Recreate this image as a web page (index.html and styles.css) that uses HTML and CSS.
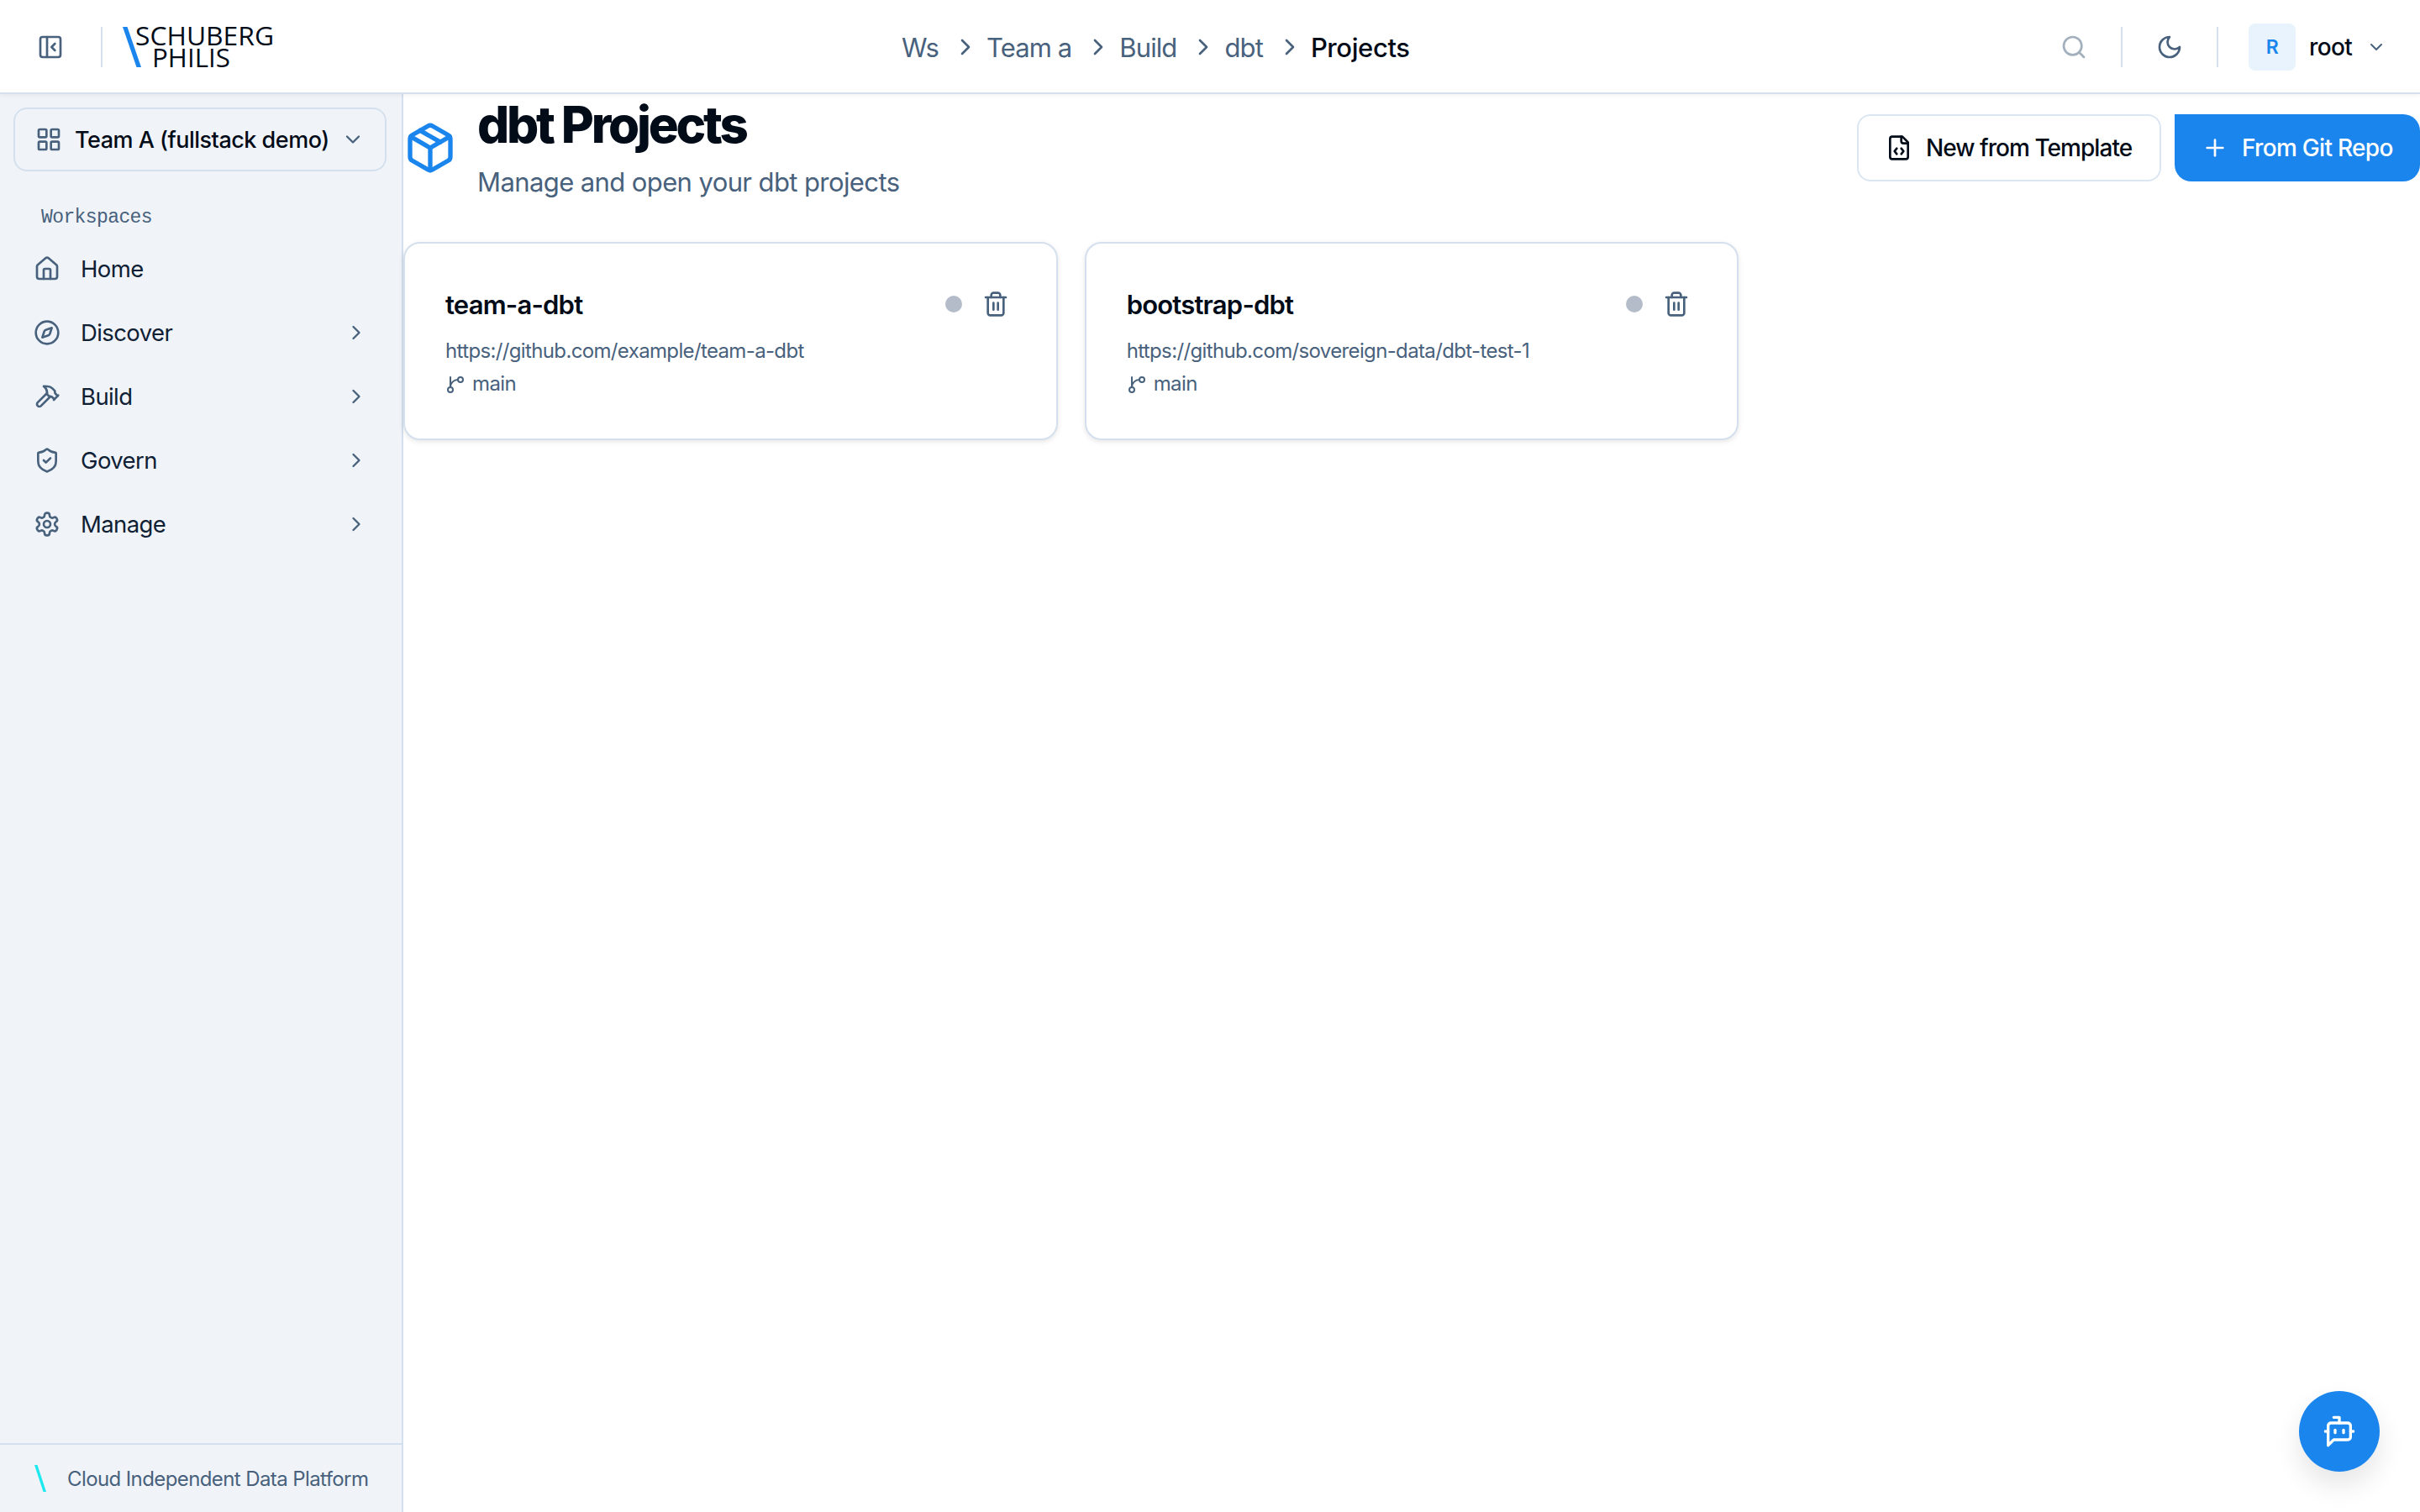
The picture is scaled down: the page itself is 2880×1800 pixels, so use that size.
FILE: index.html
```html
<!DOCTYPE html>
<html lang="en">
<head>
    <meta charset="UTF-8">
    <meta name="viewport" content="width=device-width, initial-scale=1.0">
    <title>dbt Projects</title>
    <link rel="stylesheet" href="styles.css">
</head>
<body>
    <!-- Icon shapes -->
    <svg class="sprite" aria-hidden="true">
        <symbol id="i-panel" viewBox="0 0 24 24"><rect width="18" height="18" x="3" y="3" rx="2"/><path d="M9 3v18"/><path d="m16 15-3-3 3-3"/></symbol>
        <symbol id="i-right" viewBox="0 0 24 24"><path d="m9 18 6-6-6-6"/></symbol>
        <symbol id="i-down" viewBox="0 0 24 24"><path d="m6 9 6 6 6-6"/></symbol>
        <symbol id="i-search" viewBox="0 0 24 24"><circle cx="11" cy="11" r="8"/><path d="m21 21-4.3-4.3"/></symbol>
        <symbol id="i-moon" viewBox="0 0 24 24"><path d="M12 3a6 6 0 0 0 9 9 9 9 0 1 1-9-9Z"/></symbol>
        <symbol id="i-grid" viewBox="0 0 24 24"><rect width="7" height="7" x="3" y="3" rx="1"/><rect width="7" height="7" x="14" y="3" rx="1"/><rect width="7" height="7" x="14" y="14" rx="1"/><rect width="7" height="7" x="3" y="14" rx="1"/></symbol>
        <symbol id="i-home" viewBox="0 0 24 24"><path d="M15 21v-8a1 1 0 0 0-1-1h-4a1 1 0 0 0-1 1v8"/><path d="M3 10a2 2 0 0 1 .709-1.528l7-5.999a2 2 0 0 1 2.582 0l7 5.999A2 2 0 0 1 21 10v9a2 2 0 0 1-2 2H5a2 2 0 0 1-2-2z"/></symbol>
        <symbol id="i-compass" viewBox="0 0 24 24"><path d="m16.24 7.76-1.804 5.411a2 2 0 0 1-1.265 1.265L7.76 16.24l1.804-5.411a2 2 0 0 1 1.265-1.265z"/><circle cx="12" cy="12" r="10"/></symbol>
        <symbol id="i-hammer" viewBox="0 0 24 24"><path d="m15 12-8.373 8.373a1 1 0 1 1-3-3L12 9"/><path d="m18 15 4-4"/><path d="m21.5 11.5-1.914-1.914A2 2 0 0 1 19 8.172V7l-2.26-2.26a6 6 0 0 0-4.202-1.756L9 2.96l.92.82A6.18 6.18 0 0 1 12 8.4V10l2 2h1.172a2 2 0 0 1 1.414.586L18.5 14.5"/></symbol>
        <symbol id="i-shield" viewBox="0 0 24 24"><path d="M20 13c0 5-3.5 7.5-7.66 8.95a1 1 0 0 1-.67-.01C7.5 20.5 4 18 4 13V6a1 1 0 0 1 1-1c2 0 4.5-1.2 6.24-2.72a1.17 1.17 0 0 1 1.52 0C14.51 3.81 17 5 19 5a1 1 0 0 1 1 1z"/><path d="m9 12 2 2 4-4"/></symbol>
        <symbol id="i-gear" viewBox="0 0 24 24"><path d="M12.22 2h-.44a2 2 0 0 0-2 2v.18a2 2 0 0 1-1 1.73l-.43.25a2 2 0 0 1-2 0l-.15-.08a2 2 0 0 0-2.73.73l-.22.38a2 2 0 0 0 .73 2.73l.15.1a2 2 0 0 1 1 1.72v.51a2 2 0 0 1-1 1.74l-.15.09a2 2 0 0 0-.73 2.73l.22.38a2 2 0 0 0 2.73.73l.15-.08a2 2 0 0 1 2 0l.43.25a2 2 0 0 1 1 1.73V20a2 2 0 0 0 2 2h.44a2 2 0 0 0 2-2v-.18a2 2 0 0 1 1-1.73l.43-.25a2 2 0 0 1 2 0l.15.08a2 2 0 0 0 2.73-.73l.22-.39a2 2 0 0 0-.73-2.73l-.15-.08a2 2 0 0 1-1-1.74v-.5a2 2 0 0 1 1-1.74l.15-.09a2 2 0 0 0 .73-2.73l-.22-.38a2 2 0 0 0-2.73-.73l-.15.08a2 2 0 0 1-2 0l-.43-.25a2 2 0 0 1-1-1.73V4a2 2 0 0 0-2-2z"/><circle cx="12" cy="12" r="3"/></symbol>
        <symbol id="i-package" viewBox="0 0 24 24"><path d="M11 21.73a2 2 0 0 0 2 0l7-4A2 2 0 0 0 21 16V8a2 2 0 0 0-1-1.73l-7-4a2 2 0 0 0-2 0l-7 4A2 2 0 0 0 3 8v8a2 2 0 0 0 1 1.73z"/><path d="M12 22V12"/><path d="M3.29 7 12 12l8.71-5"/><path d="m7.5 4.27 9 5.15"/></symbol>
        <symbol id="i-file" viewBox="0 0 24 24"><path d="M15 2H6a2 2 0 0 0-2 2v16a2 2 0 0 0 2 2h12a2 2 0 0 0 2-2V7Z"/><path d="M14 2v4a2 2 0 0 0 2 2h4"/><path d="m10 12.5-2 2.5 2 2.5"/><path d="m14 12.5 2 2.5-2 2.5"/></symbol>
        <symbol id="i-plus" viewBox="0 0 24 24"><path d="M5 12h14"/><path d="M12 5v14"/></symbol>
        <symbol id="i-trash" viewBox="0 0 24 24"><path d="M3 6h18"/><path d="M19 6v14c0 1-1 2-2 2H7c-1 0-2-1-2-2V6"/><path d="M8 6V4c0-1 1-2 2-2h4c1 0 2 1 2 2v2"/><path d="M10 11v6"/><path d="M14 11v6"/></symbol>
        <symbol id="i-branch" viewBox="0 0 24 24"><path d="M6 3v12"/><circle cx="18" cy="6" r="3"/><circle cx="6" cy="18" r="3"/><path d="M15 6a9 9 0 0 0-9 9"/></symbol>
        <symbol id="i-bot" viewBox="0 0 24 24"><path d="M12 6V2H8"/><path d="m8 18-4 4V8a2 2 0 0 1 2-2h12a2 2 0 0 1 2 2v8a2 2 0 0 1-2 2Z"/><path d="M2 12h2"/><path d="M9 11v2"/><path d="M15 11v2"/><path d="M20 12h2"/></symbol>
    </svg>

    <header class="topbar">
        <div class="topbar-left">
            <svg class="icon"><use href="#i-panel"/></svg>
            <span class="divider"></span>
            <svg class="logo" viewBox="0 0 182 48">
                <path class="logo-slash" d="M0 0h5.5L22 48h-5.500z"/>
                <text x="15" y="22" textLength="165" lengthAdjust="spacingAndGlyphs">SCHUBERG</text>
                <text x="35" y="48" textLength="93" lengthAdjust="spacingAndGlyphs">PHILIS</text>
            </svg>
        </div>
        <nav class="breadcrumbs">
            <span>Ws</span>
            <svg class="icon"><use href="#i-right"/></svg>
            <span>Team a</span>
            <svg class="icon"><use href="#i-right"/></svg>
            <span>Build</span>
            <svg class="icon"><use href="#i-right"/></svg>
            <span>dbt</span>
            <svg class="icon"><use href="#i-right"/></svg>
            <span class="current">Projects</span>
        </nav>
        <div class="topbar-right">
            <svg class="icon search"><use href="#i-search"/></svg>
            <span class="divider"></span>
            <svg class="icon moon"><use href="#i-moon"/></svg>
            <span class="divider"></span>
            <span class="avatar">R</span>
            <span class="username">root</span>
            <svg class="icon icon-xs"><use href="#i-down"/></svg>
        </div>
    </header>

    <div class="layout">
        <aside class="sidebar">
            <button class="team-select">
                <svg class="icon"><use href="#i-grid"/></svg>
                <span>Team A (fullstack demo)</span>
                <svg class="icon icon-sm"><use href="#i-down"/></svg>
            </button>
            <div class="section-label">Workspaces</div>
            <nav class="menu">
                <a class="menu-item"><svg class="icon"><use href="#i-home"/></svg><span>Home</span></a>
                <a class="menu-item"><svg class="icon"><use href="#i-compass"/></svg><span>Discover</span><svg class="icon icon-sm"><use href="#i-right"/></svg></a>
                <a class="menu-item"><svg class="icon"><use href="#i-hammer"/></svg><span>Build</span><svg class="icon icon-sm"><use href="#i-right"/></svg></a>
                <a class="menu-item"><svg class="icon"><use href="#i-shield"/></svg><span>Govern</span><svg class="icon icon-sm"><use href="#i-right"/></svg></a>
                <a class="menu-item"><svg class="icon"><use href="#i-gear"/></svg><span>Manage</span><svg class="icon icon-sm"><use href="#i-right"/></svg></a>
            </nav>
            <footer class="sidebar-footer">
                <svg class="mark" viewBox="0 0 14 32"><path d="M0 0h3.500L14 32h-3.500z"/></svg>
                <span>Cloud Independent Data Platform</span>
            </footer>
        </aside>

        <main class="content">
            <div class="page-header">
                <svg class="icon icon-page"><use href="#i-package"/></svg>
                <div class="page-title">
                    <h1>dbt Projects</h1>
                    <p>Manage and open your dbt projects</p>
                </div>
                <button class="btn btn-outline"><svg class="icon"><use href="#i-file"/></svg><span>New from Template</span></button>
                <button class="btn btn-primary"><svg class="icon"><use href="#i-plus"/></svg><span>From Git Repo</span></button>
            </div>

            <div class="cards">
                <article class="card">
                    <div class="card-head">
                        <h2>team-a-dbt</h2>
                        <span class="status"></span>
                        <svg class="icon"><use href="#i-trash"/></svg>
                    </div>
                    <p class="repo">https://github.com/example/team-a-dbt</p>
                    <p class="branch"><svg class="icon icon-xs"><use href="#i-branch"/></svg><span>main</span></p>
                </article>
                <article class="card">
                    <div class="card-head">
                        <h2>bootstrap-dbt</h2>
                        <span class="status"></span>
                        <svg class="icon"><use href="#i-trash"/></svg>
                    </div>
                    <p class="repo">https://github.com/sovereign-data/dbt-test-1</p>
                    <p class="branch"><svg class="icon icon-xs"><use href="#i-branch"/></svg><span>main</span></p>
                </article>
            </div>
        </main>
    </div>

    <button class="chat-button"><svg class="icon"><use href="#i-bot"/></svg></button>
</body>
</html>
```
FILE: styles.css
```css
* {
    box-sizing: border-box;
}
body {
    margin: 0;
    height: 100vh;
    display: flex;
    flex-direction: column;
    overflow: hidden;
    font-family: Inter, sans-serif;
    font-size: 28px;
    letter-spacing: -0.6px;
    color: #020b18;
    background-color: #fff;
}
h1, h2, p {
    margin: 0;
}
button {
    font: inherit;
    letter-spacing: inherit;
    color: inherit;
    border: none;
    cursor: pointer;
}
span, h1, h2, p {
    white-space: nowrap;
}
.sprite {
    display: none;
}
.icon {
    flex: none;
    width: 32px;
    height: 32px;
    fill: none;
    stroke: #48617c;
    stroke-width: 2;
    stroke-linecap: round;
    stroke-linejoin: round;
}
.icon-sm {
    width: 28px;
    height: 28px;
}
.icon-xs {
    width: 24px;
    height: 24px;
}

/* Top bar */
.topbar {
    flex: none;
    position: relative;
    display: flex;
    align-items: center;
    height: 112px;
    border-bottom: 2px solid #d5e0ee;
    box-shadow: 0 2px 6px rgba(0, 0, 0, 0.05);
    z-index: 1;
}
.topbar-left {
    display: flex;
    align-items: center;
    width: 1073px;
    padding: 2px 0 0 44px;
}
.divider {
    flex: none;
    width: 2px;
    height: 48px;
    background-color: #d5e0ee;
}
.topbar-left .divider {
    margin: 0 24px 0 44px;
}
.logo {
    width: 182px;
    height: 48px;
    overflow: visible;
    font-family: "Open Sans", sans-serif;
    font-size: 31px;
    font-weight: 500;
    letter-spacing: 0;
    fill: #020b18;
}
.logo-slash {
    fill: #1b85ee;
}
.breadcrumbs {
    display: flex;
    align-items: center;
    gap: 10px;
    padding-top: 2px;
    font-size: 31px;
    letter-spacing: -0.9px;
    color: #48617c;
}
.breadcrumbs .icon {
    margin: 0 -1px 0 6px;
}
.breadcrumbs .current {
    color: #020b18;
    font-weight: 500;
    letter-spacing: -0.4px;
}
.topbar-right {
    display: flex;
    align-items: center;
    margin-left: auto;
    padding: 2px 40px 0 0;
}
.search {
    opacity: 0.5;
    margin-right: 40px;
}
.moon {
    margin: 0 40px;
}
.avatar {
    display: flex;
    align-items: center;
    justify-content: center;
    width: 56px;
    height: 56px;
    margin: 0 16px 0 36px;
    border-radius: 8px;
    background-color: #e8f3fd;
    color: #1b85ee;
    font-size: 23px;
    font-weight: 600;
}
.username {
    width: 52px;
    margin-right: 16px;
    font-weight: 500;
}

/* Sidebar */
.layout {
    flex: 1;
    display: flex;
    min-height: 0;
}
.sidebar {
    flex: none;
    display: flex;
    flex-direction: column;
    width: 480px;
    background-color: #f0f4f9;
    border-right: 2px solid #d5e0ee;
}
.team-select {
    display: flex;
    align-items: center;
    height: 76px;
    margin: 16px 18px 0 16px;
    padding: 0 24px;
    border: 2px solid #d5e0ee;
    border-radius: 16px;
    background: none;
    font-size: 27px;
    font-weight: 500;
    letter-spacing: -0.5px;
}
.team-select span {
    flex: 1;
    margin-left: 15px;
    text-align: left;
}
.section-label {
    height: 78px;
    padding: 42px 0 0 49px;
    font-family: "Liberation Mono", monospace;
    font-size: 23px;
    line-height: 26px;
    letter-spacing: -0.6px;
    color: #48617c;
}
.menu {
    flex: 1;
}
.menu-item {
    display: flex;
    align-items: center;
    height: 76px;
    padding: 0 40px;
    font-size: 27.5px;
    color: #0f2034;
}
.menu-item span {
    flex: 1;
    margin-left: 24px;
}
.sidebar-footer {
    display: flex;
    align-items: center;
    gap: 25px;
    height: 82px;
    padding-left: 41px;
    border-top: 2px solid #d5e0ee;
    font-size: 24px;
    letter-spacing: -0.6px;
    color: #48617c;
}
.mark {
    width: 14px;
    height: 32px;
    fill: #1ce8ef;
}

/* Content */
.content {
    flex: 1;
}
.page-header {
    display: flex;
    align-items: center;
    height: 128px;
}
.icon-page {
    width: 64px;
    height: 64px;
    stroke: #1b85ee;
}
.page-title {
    flex: 1;
    align-self: flex-start;
    margin-left: 24px;
}
.page-title h1 {
    font-size: 60px;
    line-height: 72px;
    letter-spacing: -3.2px;
    font-weight: 800;
}
.page-title p {
    font-size: 31px;
    line-height: 66px;
    color: #48617c;
}
.btn {
    display: flex;
    align-items: center;
    height: 80px;
    font-weight: 500;
}
.btn-outline {
    width: 362px;
    margin-right: 16px;
    padding: 0 32px;
    border: 2px solid #dbe6f3;
    border-radius: 16px;
    background-color: #fff;
    letter-spacing: -0.95px;
}
.btn-outline .icon {
    stroke: #020b18;
}
.btn span {
    margin-left: 16px;
}
.btn-primary {
    width: 292px;
    padding: 0 32px;
    border-radius: 0 20px 20px 20px;
    background-color: #1b85ee;
    color: #fff;
    letter-spacing: -0.7px;
}
.btn-primary .icon {
    stroke: #fff;
}
.cards {
    display: grid;
    grid-template-columns: repeat(3, 1fr);
    gap: 32px;
    margin-top: 48px;
}
.card {
    height: 236px;
    padding: 48px;
    border: 2px solid #d5e0ee;
    border-radius: 20px;
    background-color: #fff;
    box-shadow: 0 2px 6px rgba(0, 0, 0, 0.1);
}
.card-head {
    display: flex;
    align-items: center;
    height: 48px;
    padding-right: 8px;
}
.card-head h2 {
    flex: 1;
    font-size: 31px;
    font-weight: 600;
    letter-spacing: -0.8px;
}
.status {
    width: 20px;
    height: 20px;
    margin-right: 24px;
    border-radius: 50%;
    background-color: #b4bcca;
}
.repo {
    margin-top: 12px;
    font-size: 24px;
    line-height: 40px;
    letter-spacing: -0.64px;
    color: #48617c;
}
.branch {
    display: flex;
    align-items: center;
    gap: 8px;
    height: 40px;
    font-size: 24px;
    line-height: 30px;
    color: #48617c;
}
.branch span {
    padding-bottom: 2px;
}

/* Floating chat button */
.chat-button {
    position: fixed;
    right: 48px;
    bottom: 48px;
    display: flex;
    align-items: center;
    justify-content: center;
    width: 96px;
    height: 96px;
    padding: 0;
    border-radius: 50%;
    background-color: #1b85ee;
    box-shadow: 0 16px 32px rgba(0, 0, 0, 0.1);
}
.chat-button .icon {
    width: 40px;
    height: 40px;
    stroke: #fff;
}
```
